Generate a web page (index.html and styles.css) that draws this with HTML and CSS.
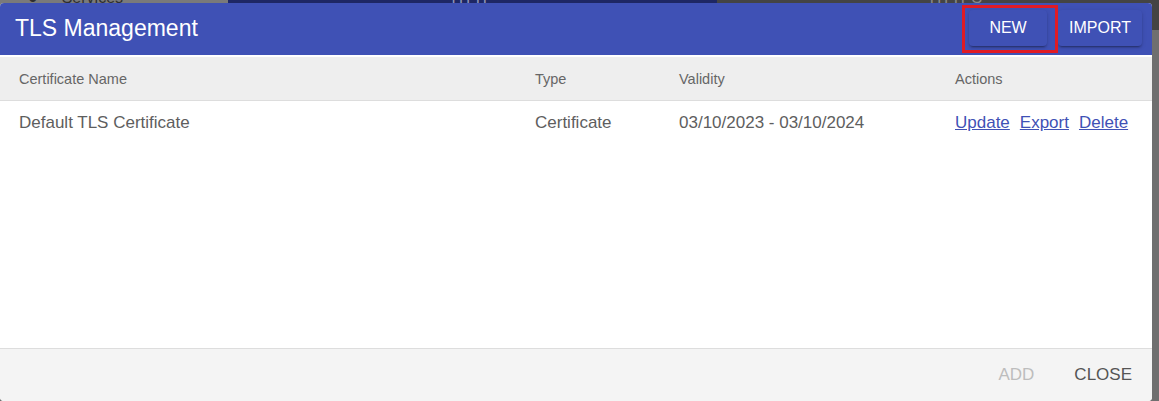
FILE: index.html
```html
<!DOCTYPE html>
<html lang="en">
<head>
<meta charset="utf-8">
<title>TLS Management</title>
<link rel="stylesheet" href="styles.css">
</head>
<body>
<div class="page">
  <div class="topbar">
    <div class="seg seg-nav"><span class="seg-icon">&#9679;</span><span class="seg-text">Services</span></div>
    <div class="seg seg-http"><span class="seg-text">HTTP</span></div>
    <div class="seg seg-https"><span class="seg-text">HTTPS</span></div>
  </div>
  <div class="backdrop"></div>
</div>

<div class="dialog">
  <header class="dialog-header">
    <h1 class="dialog-title">TLS Management</h1>
    <div class="header-actions">
      <button class="btn btn-new">NEW</button>
      <button class="btn btn-import">IMPORT</button>
      <span class="highlight"></span>
    </div>
  </header>
  <div class="dialog-content">
    <div class="table-row table-head">
      <div class="cell">Certificate Name</div>
      <div class="cell">Type</div>
      <div class="cell">Validity</div>
      <div class="cell">Actions</div>
    </div>
    <div class="table-row table-body">
      <div class="cell">Default TLS Certificate</div>
      <div class="cell">Certificate</div>
      <div class="cell">03/10/2023 - 03/10/2024</div>
      <div class="cell links">
        <a href="#" class="link">Update</a>
        <a href="#" class="link">Export</a>
        <a href="#" class="link">Delete</a>
      </div>
    </div>
  </div>
  <footer class="dialog-footer">
    <button class="text-btn disabled">ADD</button>
    <button class="text-btn">CLOSE</button>
  </footer>
</div>
</body>
</html>
```

FILE: styles.css
```css
* { box-sizing: border-box; }

html, body {
  margin: 0;
  padding: 0;
  width: 1159px;
  height: 401px;
  overflow: hidden;
  font-family: "Liberation Sans", Arial, sans-serif;
}

body {
  position: relative;
  background: #6f6f6f;
}

.page {
  display: flex;
  flex-direction: column;
  height: 100%;
}

.topbar {
  display: flex;
  height: 30px;
}

.seg {
  display: flex;
  align-items: flex-start;
  overflow: hidden;
}

.seg-nav {
  width: 228px;
  background: #7a7a7a;
  padding-left: 28px;
  gap: 24px;
  color: #2e2e2e;
}

.seg-http {
  width: 489px;
  background: #1e2764;
  justify-content: center;
  color: #8f95b8;
}

.seg-https {
  flex: 1;
  background: #444444;
  justify-content: center;
  padding-left: 36px;
  color: #8a8a8a;
}

.seg-text, .seg-icon {
  font-size: 16px;
  line-height: 16px;
  margin-top: -10px;
}

.backdrop {
  flex: 1;
  background: #6f6f6f;
}

.dialog {
  position: absolute;
  top: 3px;
  left: 0;
  width: 1152px;
  height: 398px;
  background: #ffffff;
  border-radius: 4px;
  display: flex;
  flex-direction: column;
  overflow: hidden;
}

.dialog-header {
  height: 52px;
  flex: none;
  background: #3f51b5;
  display: flex;
  align-items: center;
  justify-content: space-between;
  padding: 0 10px 0 15px;
  margin-bottom: 2px;
}

.dialog-title {
  margin: 0;
  color: #ffffff;
  font-size: 23px;
  font-weight: normal;
  margin-top: -1px;
}

.header-actions {
  position: relative;
  display: flex;
  gap: 11px;
  margin-top: -2px;
}

.btn {
  height: 36px;
  min-width: 78px;
  padding: 0 11px;
  border: none;
  border-radius: 4px;
  background: #3f51b5;
  color: #ffffff;
  font-family: "Liberation Sans", Arial, sans-serif;
  font-size: 16px;
  box-shadow: 0 3px 1px -2px rgba(0,0,0,0.2), 0 2px 2px 0 rgba(0,0,0,0.14), 0 1px 5px 0 rgba(0,0,0,0.12);
}

.highlight {
  position: absolute;
  left: -7px;
  top: -5px;
  width: 96px;
  height: 48px;
  border: 3px solid #e01b24;
  pointer-events: none;
}

.dialog-content {
  flex: 1;
  display: flex;
  flex-direction: column;
}

.table-row {
  display: grid;
  grid-template-columns: 516px 144px 276px 1fr;
  padding-left: 19px;
  align-items: center;
}

.table-head {
  height: 44px;
  background: #eeeeee;
  border-bottom: 1px solid #dddddd;
  color: #666666;
  font-size: 14.5px;
}

.table-body {
  height: 43px;
  color: #5e5e5e;
  font-size: 17px;
}

.links {
  display: flex;
  gap: 10px;
}

.link {
  color: #3f51b5;
  text-decoration: underline;
}

.dialog-footer {
  height: 53px;
  flex: none;
  background: #f4f4f4;
  border-top: 1px solid #dddddd;
  display: flex;
  justify-content: flex-end;
  align-items: center;
}

.text-btn {
  background: none;
  border: none;
  padding: 0 20px;
  height: 36px;
  font-family: "Liberation Sans", Arial, sans-serif;
  font-size: 17px;
  color: #555555;
}

.text-btn.disabled {
  color: #bdbdbd;
}
```
